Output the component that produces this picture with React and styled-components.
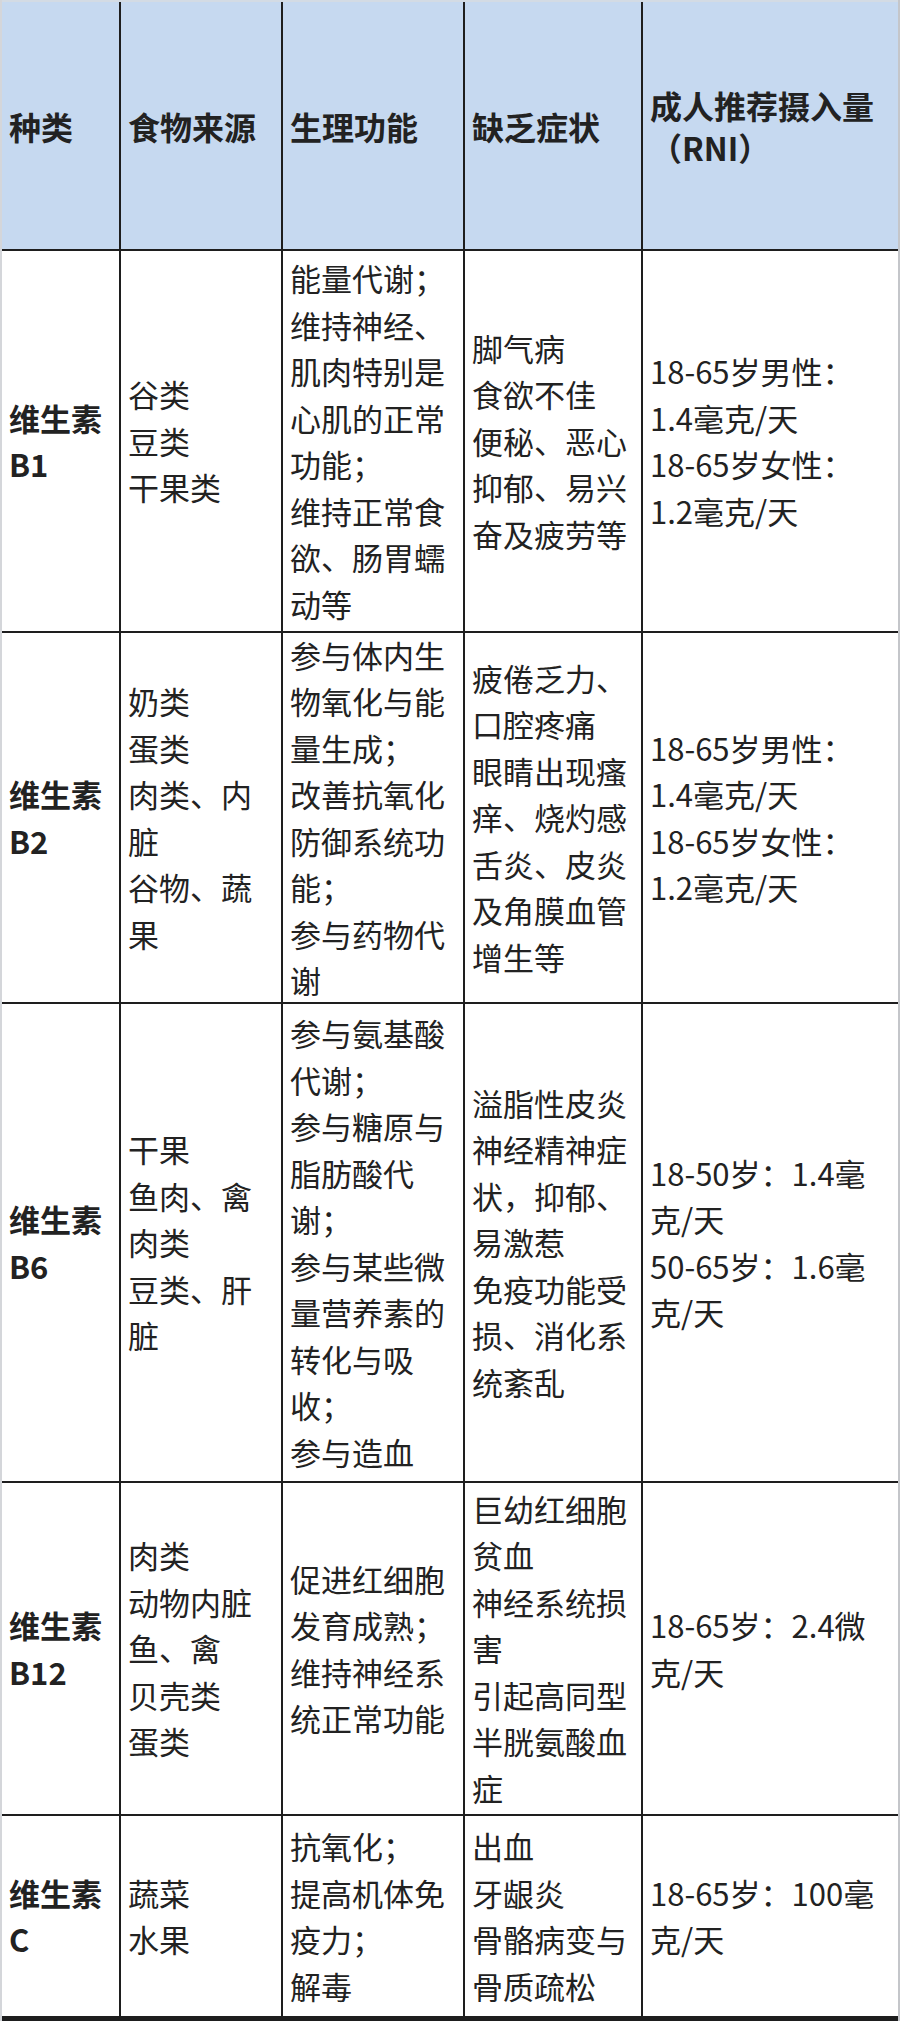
import React from "react";
import styled, { createGlobalStyle } from "styled-components";

const GlobalStyle = createGlobalStyle`
  html, body {
    margin: 0;
    padding: 0;
    background: #ffffff;
  }
  body {
    font-family: "Noto Sans CJK SC", "Noto Sans", sans-serif;
    color: #222222;
  }
`;

const Table = styled.div`
  width: 900px;
  display: flex;
  flex-direction: column;
  border-left: 2px solid #d4d6da;
  border-right: 2px solid #c4c6ca;
  box-sizing: border-box;
`;

const Row = styled.div`
  display: grid;
  grid-template-columns: 119px 162px 182px 178px 1fr;
  height: ${(p) => p.$h}px;
  box-sizing: border-box;
  border-top: ${(p) => (p.$head ? "2px solid #d3dbe4" : "none")};
  border-bottom: ${(p) => p.$bottom || 2}px solid #1e1e1e;
  background: ${(p) => (p.$head ? "#c6d9f0" : "#ffffff")};
`;

const Cell = styled.div`
  display: flex;
  flex-direction: column;
  justify-content: center;
  padding: 0 0 0 7px;
  box-sizing: border-box;
  border-right: 2px solid #1e1e1e;
  overflow: hidden;

  &:last-child {
    border-right: none;
  }
`;

const Line = styled.div`
  white-space: nowrap;
  font-size: ${(p) => (p.$head ? 32 : 31)}px;
  line-height: ${(p) => (p.$head ? 42 : 46.5)}px;
  font-weight: ${(p) => (p.$bold ? 700 : 400)};
  color: #222222;
`;

const head = [
  ["种类"],
  ["食物来源"],
  ["生理功能"],
  ["缺乏症状"],
  ["成人推荐摄入量", "（RNI）"],
];

const dose1 = ["18-65岁男性：", "1.4毫克/天", "18-65岁女性：", "1.2毫克/天"];

const rows = [
  {
    h: 382,
    cells: [
      ["维生素", "B1"],
      ["谷类", "豆类", "干果类"],
      ["能量代谢；", "维持神经、", "肌肉特别是", "心肌的正常", "功能；", "维持正常食", "欲、肠胃蠕", "动等"],
      ["脚气病", "食欲不佳", "便秘、恶心", "抑郁、易兴", "奋及疲劳等"],
      dose1,
    ],
  },
  {
    h: 371,
    cells: [
      ["维生素", "B2"],
      ["奶类", "蛋类", "肉类、内", "脏", "谷物、蔬", "果"],
      ["参与体内生", "物氧化与能", "量生成；", "改善抗氧化", "防御系统功", "能；", "参与药物代", "谢"],
      ["疲倦乏力、", "口腔疼痛", "眼睛出现瘙", "痒、烧灼感", "舌炎、皮炎", "及角膜血管", "增生等"],
      dose1,
    ],
  },
  {
    h: 479,
    cells: [
      ["维生素", "B6"],
      ["干果", "鱼肉、禽", "肉类", "豆类、肝", "脏"],
      ["参与氨基酸", "代谢；", "参与糖原与", "脂肪酸代", "谢；", "参与某些微", "量营养素的", "转化与吸", "收；", "参与造血"],
      ["溢脂性皮炎", "神经精神症", "状，抑郁、", "易激惹", "免疫功能受", "损、消化系", "统紊乱"],
      ["18-50岁：1.4毫", "克/天", "50-65岁：1.6毫", "克/天"],
    ],
  },
  {
    h: 333,
    cells: [
      ["维生素", "B12"],
      ["肉类", "动物内脏", "鱼、禽", "贝壳类", "蛋类"],
      ["促进红细胞", "发育成熟；", "维持神经系", "统正常功能"],
      ["巨幼红细胞", "贫血", "神经系统损", "害", "引起高同型", "半胱氨酸血", "症"],
      ["18-65岁：2.4微", "克/天"],
    ],
  },
  {
    h: 205,
    bottom: 5,
    cells: [
      ["维生素", "C"],
      ["蔬菜", "水果"],
      ["抗氧化；", "提高机体免", "疫力；", "解毒"],
      ["出血", "牙龈炎", "骨骼病变与", "骨质疏松"],
      ["18-65岁：100毫", "克/天"],
    ],
  },
];

const App = () => {
  return (
    <>
      <GlobalStyle />
      <Table>
        <Row $h={251} $head>
          {head.map((lines, i) => (
            <Cell key={i}>
              {lines.map((t, j) => (
                <Line key={j} $head $bold>
                  {t}
                </Line>
              ))}
            </Cell>
          ))}
        </Row>
        {rows.map((row, r) => (
          <Row key={r} $h={row.h} $bottom={row.bottom}>
            {row.cells.map((lines, i) => (
              <Cell key={i}>
                {lines.map((t, j) => (
                  <Line key={j} $bold={i === 0}>
                    {t}
                  </Line>
                ))}
              </Cell>
            ))}
          </Row>
        ))}
      </Table>
    </>
  );
};

export default App;
